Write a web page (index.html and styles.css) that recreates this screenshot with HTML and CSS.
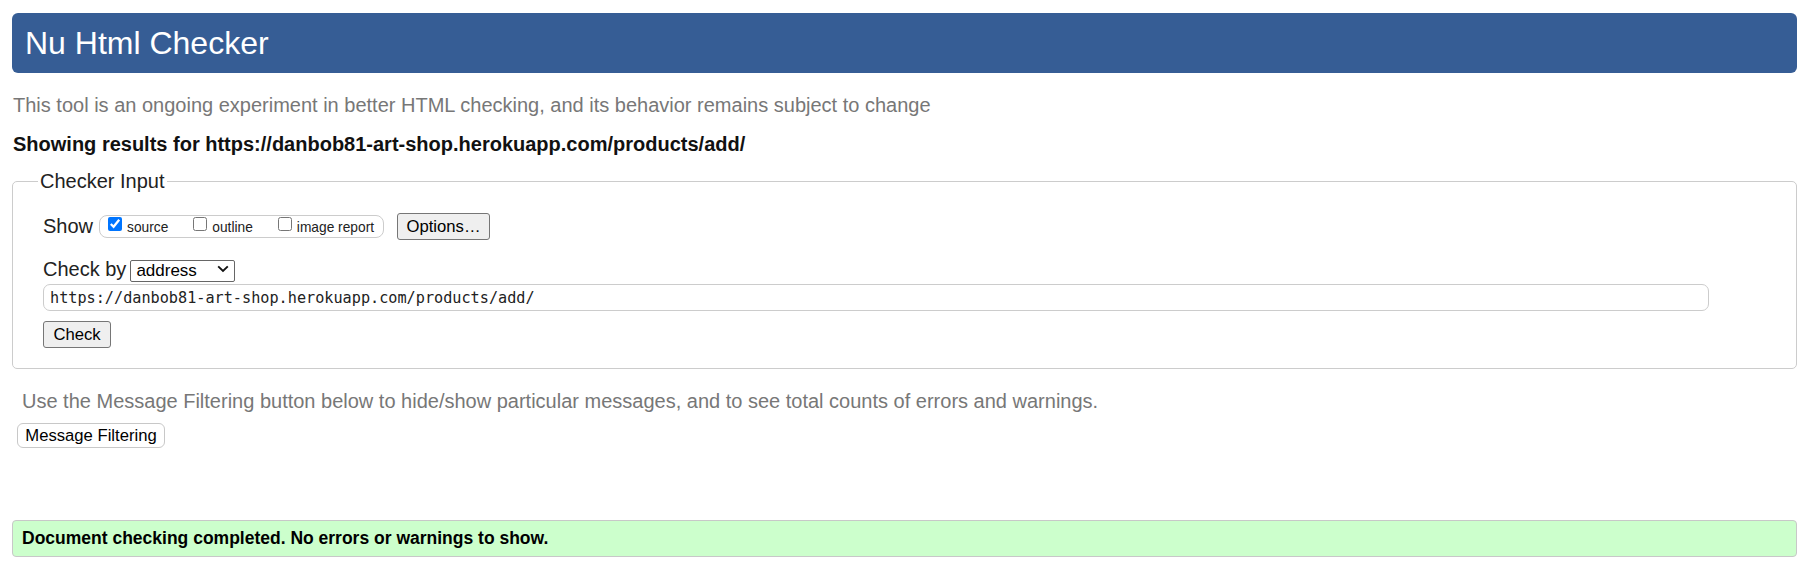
FILE: index.html
```html
<!DOCTYPE html>
<html lang="en">
<head>
<meta charset="utf-8">
<title>Nu Html Checker</title>
<link rel="stylesheet" href="styles.css">
</head>
<body>
<h1 class="title">Nu Html Checker</h1>
<p class="intro">This tool is an ongoing experiment in better HTML checking, and its behavior remains subject to change</p>
<p class="showing">Showing results for https://danbob81-art-shop.herokuapp.com/products/add/</p>
<form class="checker">
  <fieldset class="input-set">
    <legend class="legend">Checker Input</legend>
    <div class="row row-show">
      <span class="row-label">Show</span>
      <span class="show-group">
        <label class="opt"><input class="cb" type="checkbox" checked>source</label>
        <label class="opt"><input class="cb" type="checkbox">outline</label>
        <label class="opt opt-last"><input class="cb" type="checkbox">image report</label>
      </span>
      <button type="button" class="btn btn-options">Options…</button>
    </div>
    <div class="row row-checkby">
      <span class="row-label">Check by</span>
      <span class="select-wrap">
        <select class="select"><option>address</option></select>
        <svg class="chev" width="12" height="8" viewBox="0 0 12 8"><path d="M1.2 1.4 L6 6 L10.8 1.4" fill="none" stroke="#111" stroke-width="1.9"/></svg>
      </span>
    </div>
    <input class="url" type="text" value="https://danbob81-art-shop.herokuapp.com/products/add/">
    <button type="button" class="btn btn-check">Check</button>
  </fieldset>
</form>
<p class="filter-note">Use the Message Filtering button below to hide/show particular messages, and to see total counts of errors and warnings.</p>
<button type="button" class="btn-filter">Message Filtering</button>
<div class="result-ok">Document checking completed. No errors or warnings to show.</div>
</body>
</html>
```
FILE: styles.css
```css
html { background: #fff; }
body {
  margin: 0;
  padding: 13px 17px 0 12px;
  font-family: "Liberation Sans", Arial, sans-serif;
  font-size: 20px;
  color: #222;
}
.title {
  margin: 0;
  height: 60px;
  line-height: 60px;
  padding-left: 13px;
  background: #365d95;
  color: #fff;
  font-size: 32px;
  font-weight: normal;
  border-radius: 6px;
}
.intro {
  margin: 21px 0 0 1px;
  font-size: 20px;
  line-height: 23px;
  color: #777;
}
.showing {
  margin: 16px 0 0 1px;
  font-size: 20px;
  line-height: 23px;
  font-weight: bold;
  color: #111;
}
.checker { margin: 0; }
.input-set {
  margin: 14px 0 0 0;
  border: 1px solid #ccc;
  border-radius: 5px;
  padding: 20px 0 20px 30px;
  min-width: 0;
}
.legend {
  margin-left: -5px;
  padding: 0 2px;
  font-size: 20px;
  line-height: 23px;
  color: #222;
}
.row {
  display: flex;
  align-items: center;
}
.row-show { height: 27px; }
.row-checkby { height: 22px; margin-top: 18px; }
.row-label {
  font-size: 20px;
  line-height: 23px;
  color: #222;
}
.row-show .row-label { margin-right: 6px; }
.row-checkby .row-label { margin-right: 4px; }
.show-group {
  display: flex;
  align-items: center;
  box-sizing: border-box;
  height: 23px;
  width: 285px;
  padding: 0 0 0 8px;
  border: 1px solid #ccc;
  border-radius: 8px;
  font-size: 13.75px;
  color: #222;
}
.opt {
  display: flex;
  align-items: center;
  margin-right: 25px;
  padding-top: 1px;
}
.opt-last { margin-right: 0; }
.cb {
  width: 14px;
  height: 14px;
  margin: 0 5px 6px 0;
}
.btn {
  box-sizing: border-box;
  height: 27px;
  padding: 0;
  background: #efefef;
  border: 1px solid #767676;
  border-radius: 3px;
  font-family: "Liberation Sans", Arial, sans-serif;
  font-size: 16.67px;
  color: #000;
}
.btn-options { width: 93px; margin-left: 13px; }
.btn-check { display: block; width: 68px; margin-top: 10px; }
.select-wrap {
  position: relative;
  display: inline-block;
  width: 105px;
  height: 22px;
}
.select {
  appearance: none;
  -webkit-appearance: none;
  box-sizing: border-box;
  width: 105px;
  height: 22px;
  margin: 0;
  padding: 0 0 0 5px;
  border: 1px solid #666;
  border-radius: 2px;
  background: #fff;
  font-family: "Liberation Sans", Arial, sans-serif;
  font-size: 17px;
  color: #000;
}
.chev {
  position: absolute;
  right: 6px;
  top: 7px;
  pointer-events: none;
}
.url {
  display: block;
  box-sizing: border-box;
  width: 1666px;
  height: 27px;
  margin: 4px 0 0 0;
  padding: 0 0 0 6px;
  border: 1px solid #ccc;
  border-radius: 7px;
  font-family: "DejaVu Sans Mono", monospace;
  font-size: 15.2px;
  color: #222;
  background: #fff;
}
.filter-note {
  margin: 21px 0 0 10px;
  font-size: 20px;
  line-height: 23px;
  color: #777;
}
.btn-filter {
  display: block;
  box-sizing: border-box;
  width: 148px;
  height: 25px;
  margin: 10px 0 0 5px;
  padding: 0;
  background: #fff;
  border: 1px solid #c8c8c8;
  border-radius: 6px;
  font-family: "Liberation Sans", Arial, sans-serif;
  font-size: 16.67px;
  color: #000;
}
.result-ok {
  box-sizing: border-box;
  height: 37px;
  margin-top: 72px;
  padding-left: 9px;
  line-height: 35px;
  background: #ccffcc;
  border: 1px solid #c8c8c8;
  border-radius: 4px;
  font-size: 17.5px;
  font-weight: bold;
  color: #000;
}
```
